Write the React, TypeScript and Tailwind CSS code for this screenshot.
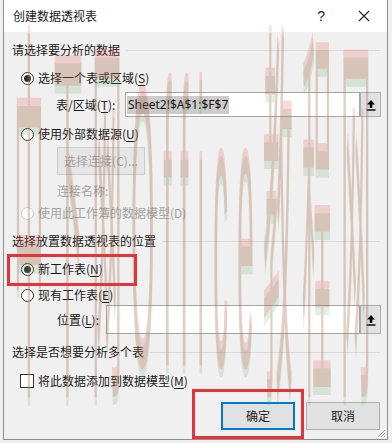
import React from "react";

const font = { fontFamily: '"Noto Sans CJK SC", "Noto Sans", sans-serif' };

function Radio({ checked = false, disabled = false }: { checked?: boolean; disabled?: boolean }) {
  return (
    <span
      className={`flex h-[13px] w-[13px] shrink-0 items-center justify-center rounded-full border bg-white ${
        disabled ? "border-[#cfcfcf]" : "border-[#333333]"
      }`}
    >
      {checked && <span className="h-[7px] w-[7px] rounded-full bg-[#333333]" />}
    </span>
  );
}

function U({ children }: { children: React.ReactNode }) {
  return <span className="underline underline-offset-2 decoration-1">{children}</span>;
}

function Section({ title }: { title: string }) {
  return (
    <div className="flex h-[20px] items-center gap-[6px] pl-[8px] pr-[7px]">
      <span className="whitespace-nowrap text-[12px] leading-none text-[#1a1a1a]">{title}</span>
      <span className="h-px flex-1 bg-[#dadada]" />
    </div>
  );
}

function PickerButton() {
  return (
    <div className="flex h-full w-[21px] shrink-0 items-center justify-center border border-[#adadad] bg-[#e1e1e1]">
      <svg width="10" height="12" viewBox="0 0 10 12">
        <path d="M5 1 L9 5.5 L6.3 5.5 L6.3 9 L3.7 9 L3.7 5.5 L1 5.5 Z" fill="#000" />
        <rect x="0.5" y="10.3" width="9" height="1.4" fill="#000" />
      </svg>
    </div>
  );
}

export default function App() {
  return (
    <div className="relative h-[443px] w-[392px] overflow-hidden bg-[#f0f0f0] pb-[3px] pl-[3px] pr-[4px]" style={font}>
      <div className="relative flex h-full flex-col border-x border-b border-[#8e8e8e] bg-[#f0f0f0]">
        {/* Title bar */}
        <div className="flex h-[32px] shrink-0 items-center bg-white pl-[9px]">
          <span className="text-[12px] leading-none text-[#1a1a1a]">创建数据透视表</span>
          <span className="ml-auto mr-[33px] text-[14px] leading-none text-[#222]" style={{ fontFamily: '"Liberation Sans", sans-serif' }}>
            ?
          </span>
          <svg width="12" height="12" viewBox="0 0 12 12" className="mr-[17px]">
            <path d="M1 1 L11 11 M11 1 L1 11" stroke="#222" strokeWidth="1.1" />
          </svg>
        </div>

        {/* Body */}
        <div className="relative flex flex-1 flex-col">
          <div className="mt-[8px]">
            <Section title="请选择要分析的数据" />
          </div>

          <div className="mt-[8px] flex h-[20px] items-center gap-[4px] pl-[17px] text-[12px] leading-none text-[#1a1a1a]">
            <Radio checked />
            <span>
              选择一个表或区域(<U>S</U>)
            </span>
          </div>

          <div className="mt-[4px] flex h-[25px] items-center pl-[52px] pr-[6px] text-[12px] leading-none text-[#1a1a1a]">
            <span className="w-[69px] whitespace-nowrap">
              表/区域(<U>T</U>):
            </span>
            <div className="flex h-full flex-1 items-center border border-[#a5a5a5] bg-white pl-[1px]">
              <span className="bg-[#cccccc] px-[1px] py-[3px] text-[12px] leading-none text-[#111]" style={{ fontFamily: '"Noto Sans", sans-serif' }}>
                Sheet2!$A$1:$F$7
              </span>
            </div>
            <PickerButton />
          </div>

          <div className="mt-[7px] flex h-[20px] items-center gap-[4px] pl-[17px] text-[12px] leading-none text-[#1a1a1a]">
            <Radio />
            <span>
              使用外部数据源(<U>U</U>)
            </span>
          </div>

          <div className="mt-[3px] pl-[53px]">
            <div className="flex h-[28px] w-[88px] items-center justify-center border border-[#cccccc] bg-[#e6e6e6] text-[12px] leading-none text-[#a3a3a3]">
              选择连接(C)...
            </div>
          </div>

          <div className="mt-[6px] flex h-[20px] items-center pl-[53px] text-[12px] leading-none text-[#a3a3a3]">
            连接名称:
          </div>

          <div className="mt-[2px] flex h-[20px] items-center gap-[4px] pl-[17px] text-[12px] leading-none text-[#a3a3a3]">
            <Radio disabled />
            <span>使用此工作簿的数据模型(D)</span>
          </div>

          <div className="mt-[8px]">
            <Section title="选择放置数据透视表的位置" />
          </div>

          <div className="mt-[8px] flex h-[20px] items-center gap-[4px] pl-[17px] text-[12px] leading-none text-[#1a1a1a]">
            <Radio checked />
            <span>
              新工作表(<U>N</U>)
            </span>
          </div>

          <div className="mt-[6px] flex h-[20px] items-center gap-[4px] pl-[17px] text-[12px] leading-none text-[#1a1a1a]">
            <Radio />
            <span>
              现有工作表(<U>E</U>)
            </span>
          </div>

          <div className="mt-[0px] flex h-[29px] items-center pl-[53px] pr-[6px] text-[12px] leading-none text-[#1a1a1a]">
            <span className="w-[49px] whitespace-nowrap">
              位置(<U>L</U>):
            </span>
            <div className="h-full flex-1 border border-[#a5a5a5] bg-white" />
            <PickerButton />
          </div>

          <div className="mt-[8px]">
            <Section title="选择是否想要分析多个表" />
          </div>

          <div className="mt-[9px] flex h-[20px] items-center gap-[4px] pl-[16px] text-[12px] leading-none text-[#1a1a1a]">
            <span className="h-[14px] w-[14px] shrink-0 border border-[#333333] bg-white" />
            <span>
              将此数据添加到数据模型(<U>M</U>)
            </span>
          </div>

          <div className="mt-[11px] flex justify-end gap-[11px] pr-[7px]">
            <div className="flex h-[28px] w-[74px] items-center justify-center border-2 border-[#0078d7] bg-[#e1e1e1] text-[12px] leading-none text-[#1a1a1a]">
              确定
            </div>
            <div className="flex h-[28px] w-[74px] items-center justify-center border border-[#adadad] bg-[#e1e1e1] text-[12px] leading-none text-[#1a1a1a]">
              取消
            </div>
          </div>

          {/* Resize grip */}
          <svg width="10" height="10" viewBox="0 0 10 10" className="absolute bottom-[1px] right-[1px]">
            <path d="M9 2 L2 9 M9 5 L5 9 M9 8 L8 9" stroke="#a0a0a0" strokeWidth="1" />
          </svg>

          {/* Watermark overlay */}
          <div className="pointer-events-none absolute left-[10px] top-[-4px] h-[390px] w-[372px]" aria-hidden="true">
            <div
              className="origin-top-left whitespace-nowrap text-[30px] leading-none tracking-[9px] text-[rgba(235,70,70,0.2)]"
              style={{
                transform: "scale(1, 13.5)",
                textShadow: "0 0.6px 0 rgba(60,170,80,0.16)",
                fontFamily: '"Liberation Sans", "Noto Sans CJK SC", sans-serif',
              }}
            >
              中下网Office教程网
            </div>
          </div>

          {/* Annotation boxes */}
          <div className="pointer-events-none absolute left-[3px] top-[222px] h-[32px] w-[130px] border-[3px] border-[#e5333b]" />
          <div className="pointer-events-none absolute left-[188px] top-[357px] h-[50px] w-[112px] border-[3px] border-[#e5333b]" />
        </div>
      </div>
    </div>
  );
}
